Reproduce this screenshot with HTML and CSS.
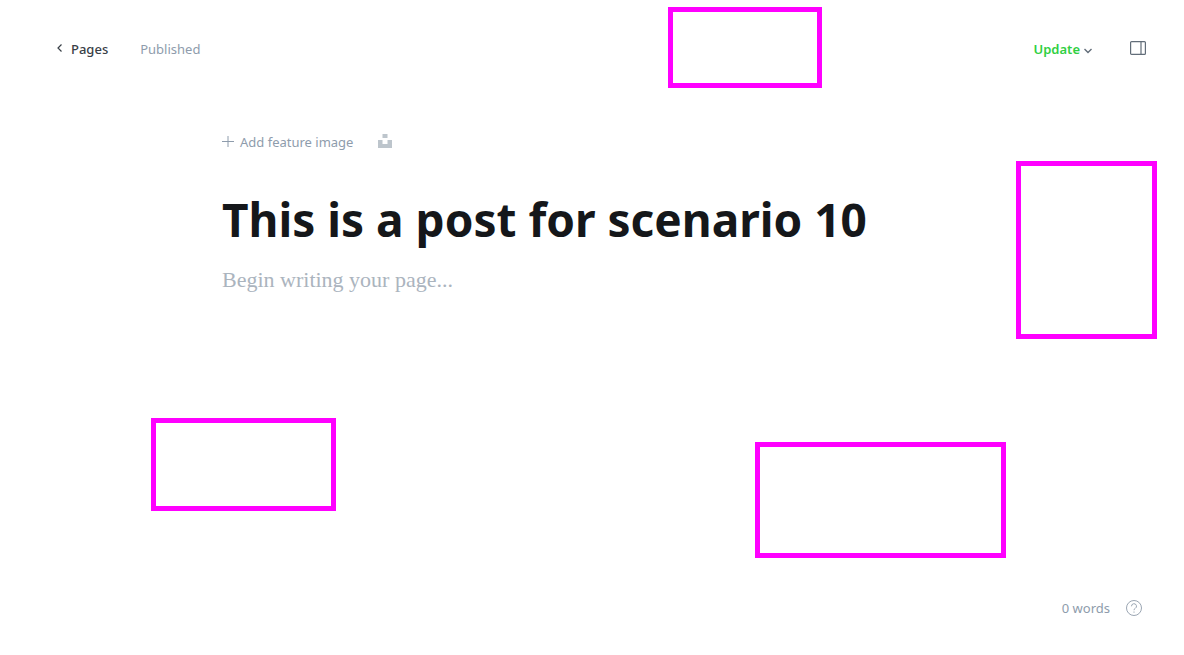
FILE: index.html
```html
<!DOCTYPE html>
<html lang="en">
<head>
<meta charset="utf-8">
<meta name="viewport" content="width=device-width, initial-scale=1">
<title>Page editor</title>
<link rel="stylesheet" href="styles.css">
</head>
<body>
<div class="editor">
  <header class="toolbar">
    <nav class="toolbar-group">
      <a class="back-link" href="#">
        <svg class="back-icon" viewBox="0 0 6 8" aria-hidden="true"><path d="M5.500 .5 2 4 5.500 7.500"/></svg>
        Pages
      </a>
      <span class="status">Published</span>
    </nav>
    <div class="toolbar-group">
      <button class="update-button" type="button">
        <span>Update</span>
        <svg class="chevron-icon" viewBox="0 0 8 6" aria-hidden="true"><path d="M.5 1 4 4.500 7.500 1"/></svg>
      </button>
      <button class="icon-button" type="button" aria-label="Settings">
        <svg class="panel-icon" viewBox="0 0 16 14" aria-hidden="true"><rect x=".6" y=".6" width="14.800" height="12.800" rx="1"/><path d="M11 .5v13"/></svg>
      </button>
    </div>
  </header>
  <main class="content">
    <div class="feature-row">
      <button class="feature-button" type="button">
        <svg class="plus-icon" viewBox="0 0 12 12" aria-hidden="true"><path d="M6 0v11M0 5.500h12"/></svg>
        <span>Add feature image</span>
      </button>
      <button class="icon-button" type="button" aria-label="Choose from Unsplash">
        <svg class="unsplash-icon" viewBox="0 0 14 14" aria-hidden="true"><path d="M4.500 0h5v4h-5zM0 6h4.500v4h5V6H14v8H0z"/></svg>
      </button>
    </div>
    <input class="title-input" type="text" aria-label="Page title" value="This is a post for scenario 10">
    <textarea class="body-input" rows="1" aria-label="Page content" placeholder="Begin writing your page..."></textarea>
  </main>
  <footer class="footer">
    <span>0 words</span>
    <a class="help-link" href="#" aria-label="Help">
      <svg class="help-icon" viewBox="0 0 16 16" aria-hidden="true"><circle cx="8" cy="8" r="7.500"/><path d="M5.500 6.300a2.500 2.500 0 1 1 3.700 2.100Q8 9 8 10.200"/><path d="M8 11.500v1.200"/></svg>
    </a>
  </footer>
  <div class="region region-top"></div>
  <div class="region region-right"></div>
  <div class="region region-left"></div>
  <div class="region region-bottom"></div>
</div>
</body>
</html>
```
FILE: styles.css
```css
* { box-sizing: border-box; }

body {
  margin: 0;
  background: #fff;
  color: #15171a;
  font-family: "Noto Sans", "Open Sans", sans-serif;
  font-size: 13px;
  line-height: 20px;
}

button, input, textarea {
  margin: 0;
  padding: 0;
  border: 0;
  outline: 0;
  background: none;
  color: inherit;
  font: inherit;
}

button { cursor: pointer; }
a { color: inherit; text-decoration: none; }

svg {
  display: block;
  fill: none;
  stroke: currentColor;
}

.editor {
  position: relative;
  display: flex;
  flex-direction: column;
  min-height: 100vh;
}

.toolbar {
  display: flex;
  justify-content: space-between;
  padding: 39px 38px 0 56px;
}

.toolbar-group {
  display: flex;
  align-items: center;
  gap: 32px;
}

.back-link {
  display: flex;
  align-items: center;
  gap: 9px;
  color: #394047;
  font-weight: 500;
}

.back-icon {
  width: 6px;
  height: 8px;
  margin-bottom: 2px;
  stroke-width: 1.2;
}

.status { color: #8e9cac; }

.update-button {
  display: flex;
  align-items: center;
  gap: 4px;
  margin-right: 6px;
  color: #30cf43;
  font-weight: 600;
}

.chevron-icon {
  width: 8px;
  height: 6px;
  margin-top: 4px;
  color: #626d79;
  stroke-width: 1.4;
}

.panel-icon {
  width: 16px;
  height: 14px;
  margin-bottom: 2px;
  color: #626d79;
  stroke-width: 1.2;
}

.content {
  flex: 1;
  width: 100%;
  max-width: 740px;
  margin: 0 auto;
  padding-top: 73px;
}

.feature-row {
  display: flex;
  align-items: center;
  gap: 25px;
  color: #8e9cac;
}

.feature-button {
  display: flex;
  align-items: center;
  gap: 6px;
}

.plus-icon { width: 12px; height: 12px; }

.unsplash-icon {
  width: 14px;
  height: 14px;
  margin-bottom: 2px;
  color: #bdc5cc;
  fill: currentColor;
  stroke: none;
}

.title-input {
  display: block;
  width: 100%;
  height: 60px;
  margin-top: 37px;
  font-size: 46px;
  font-weight: 700;
  line-height: 60px;
}

.body-input {
  display: block;
  width: 100%;
  height: 32px;
  margin-top: 15px;
  overflow: hidden;
  resize: none;
  font-family: Georgia, "Liberation Serif", serif;
  font-size: 22px;
  line-height: 32px;
}

.body-input::placeholder { color: #abb4be; opacity: 1; }

.footer {
  display: flex;
  align-items: center;
  justify-content: flex-end;
  gap: 16px;
  padding: 0 42px 37px;
  color: #8e9cac;
}

.help-icon { width: 16px; height: 16px; color: #9ba6b3; }

.region {
  position: absolute;
  border: 5px solid #f0f;
  pointer-events: none;
}

.region-top { left: 668px; top: 7px; width: 154px; height: 81px; }
.region-right { left: 1016px; top: 161px; width: 141px; height: 178px; }
.region-left { left: 151px; top: 418px; width: 185px; height: 93px; }
.region-bottom { left: 755px; top: 442px; width: 251px; height: 116px; }
```
